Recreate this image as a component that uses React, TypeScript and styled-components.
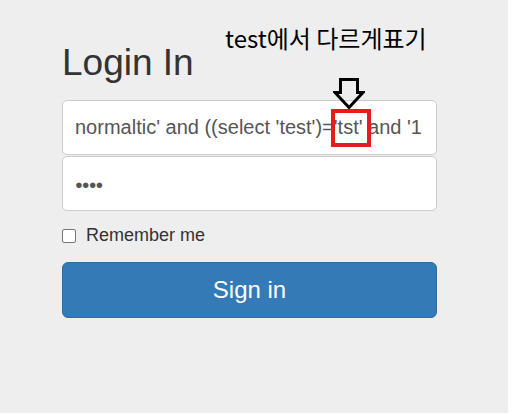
import React from 'react';
import styled, { createGlobalStyle } from 'styled-components';

const GlobalStyle = createGlobalStyle`
	html, body {
		margin: 0;
		padding: 0;
		background: #fff;
	}
	* {
		box-sizing: border-box;
	}
`;

const Page = styled.div`
	width: 508px;
	height: 413px;
	background: #eeeeee;
	padding: 41px 0 0 62px;
	font-family: 'Liberation Sans', Arial, sans-serif;
	color: #333;
	position: relative;
`;

const Form = styled.form`
	width: 375px;
	display: flex;
	flex-direction: column;
	position: relative;
`;

const Heading = styled.h2`
	margin: 0 0 15px;
	font-size: 37px;
	font-weight: 400;
	line-height: 44px;
	color: #333;
`;

const Field = styled.div<{ $gap?: number }>`
	height: 55px;
	margin-top: ${(p) => p.$gap ?? 0}px;
	background: #fff;
	border: 1px solid #ccc;
	border-radius: 5px;
	display: flex;
	align-items: center;
	padding: 0 10px 0 12px;
	font-size: 20px;
	color: #555;
	white-space: nowrap;
`;

const Value = styled.span`
	flex: 1;
	overflow: hidden;
	white-space: nowrap;
`;

const Dots = styled.span`
	font-size: 13px;
	letter-spacing: -1px;
	color: #555;
	padding-top: 2px;
`;

const CheckRow = styled.label`
	display: flex;
	align-items: center;
	gap: 10px;
	margin-top: 14px;
	font-size: 18px;
	color: #333;
`;

const Box = styled.span`
	width: 14px;
	height: 14px;
	border: 1px solid #767676;
	border-radius: 2px;
	background: #fff;
`;

const Button = styled.button`
	margin-top: 16px;
	height: 56px;
	border: 1px solid #2e6da4;
	border-radius: 6px;
	background: #337ab7;
	color: #fff;
	font-family: 'Liberation Sans', Arial, sans-serif;
	font-size: 24px;
	padding: 0;
`;

const Note = styled.div`
	position: absolute;
	left: 225px;
	top: 23px;
	font-family: 'Noto Sans CJK KR', 'Noto Sans', sans-serif;
	font-size: 24px;
	line-height: 30px;
	color: #000;
`;

const Arrow = styled.svg`
	position: absolute;
	left: 333px;
	top: 78px;
`;

const Mark = styled.div`
	position: absolute;
	left: 331px;
	top: 109px;
	width: 40px;
	height: 38px;
	border: 4px solid #e8191f;
`;

export default function App() {
	return (
		<>
			<GlobalStyle />
			<Page>
				<Form onSubmit={(e) => e.preventDefault()}>
					<Heading>Login In</Heading>
					<Field>
						<Value>normaltic' and ((select 'test')='tst' and '1</Value>
					</Field>
					<Field $gap={1}>
						<Dots>●●●●</Dots>
					</Field>
					<CheckRow>
						<Box />
						Remember me
					</CheckRow>
					<Button type="submit">Sign in</Button>
				</Form>
				<Note>test에서 다르게표기</Note>
				<Arrow width="32" height="32" viewBox="0 0 32 32">
					<path
						d="M7.5 1.5 H24.5 V14.5 H30 L16 29.5 L2 14.5 H7.5 Z"
						fill="none"
						stroke="#000"
						strokeWidth="3"
						strokeLinejoin="miter"
					/>
				</Arrow>
				<Mark />
			</Page>
		</>
	);
}
